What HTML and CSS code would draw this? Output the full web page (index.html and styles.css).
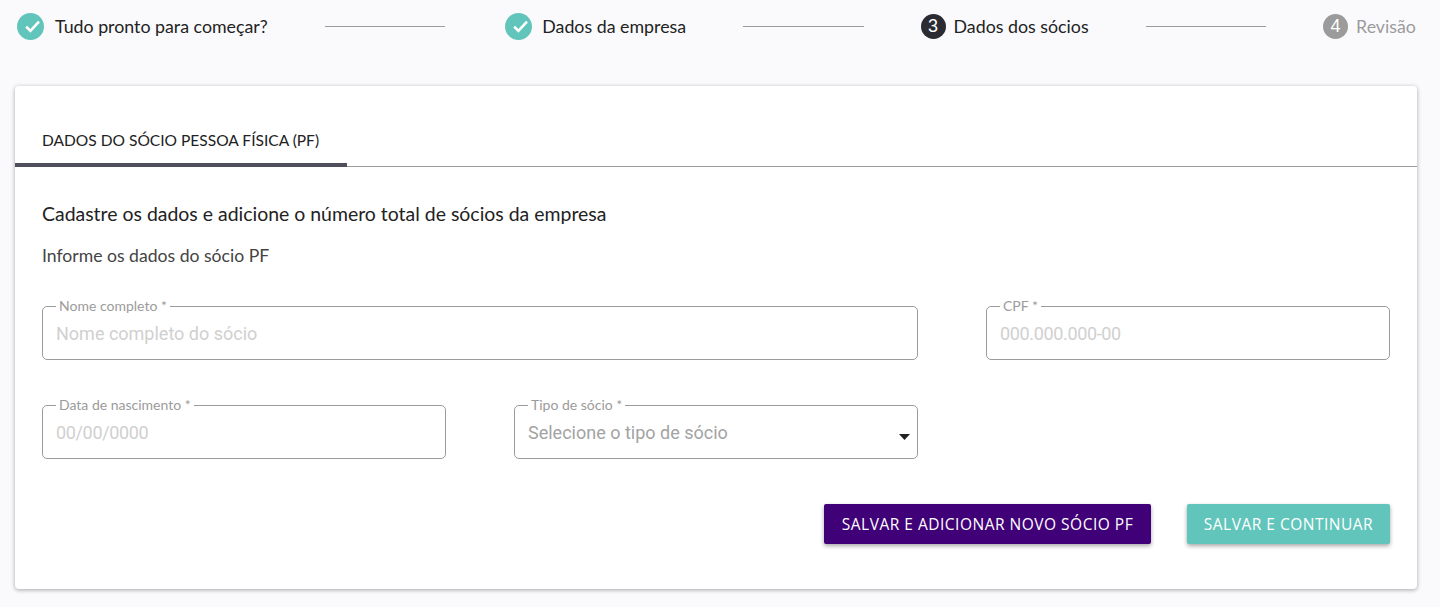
FILE: index.html
```html
<!DOCTYPE html>
<html lang="pt-BR">
<head>
<meta charset="utf-8">
<title>Dados dos sócios</title>
<link rel="stylesheet" href="styles.css">
</head>
<body>
<nav class="stepper">
  <div class="step">
    <svg class="check" viewBox="0 0 27 27"><circle cx="13.5" cy="13.5" r="13.5" fill="#62c5bb"/><path d="M9.2 13.6l4.2 4.2L22 8.6" fill="none" stroke="#fff" stroke-width="2.6"/></svg>
    <span class="step-label">Tudo pronto para começar?</span>
  </div>
  <div class="line"></div>
  <div class="step step-second">
    <svg class="check" viewBox="0 0 27 27"><circle cx="13.5" cy="13.5" r="13.5" fill="#62c5bb"/><path d="M9.2 13.6l4.2 4.2L22 8.6" fill="none" stroke="#fff" stroke-width="2.6"/></svg>
    <span class="step-label">Dados da empresa</span>
  </div>
  <div class="line"></div>
  <div class="step step-near">
    <span class="num num-active">3</span>
    <span class="step-label">Dados dos sócios</span>
  </div>
  <div class="line"></div>
  <div class="step step-near">
    <span class="num num-off">4</span>
    <span class="step-label label-off">Revisão</span>
  </div>
</nav>

<main class="card">
  <div class="tabs">
    <div class="tab">DADOS DO SÓCIO PESSOA FÍSICA (PF)</div>
  </div>
  <div class="content">
    <h2 class="title">Cadastre os dados e adicione o número total de sócios da empresa</h2>
    <p class="subtitle">Informe os dados do sócio PF</p>
    <div class="form-grid">
      <fieldset class="field span-2">
        <legend>Nome completo *</legend>
        <span class="ph">Nome completo do sócio</span>
      </fieldset>
      <fieldset class="field">
        <legend>CPF *</legend>
        <span class="ph ph-num">000.000.000-00</span>
      </fieldset>
      <fieldset class="field">
        <legend>Data de nascimento *</legend>
        <span class="ph ph-num">00/00/0000</span>
      </fieldset>
      <fieldset class="field field-select">
        <legend>Tipo de sócio *</legend>
        <span class="ph ph-select">Selecione o tipo de sócio</span>
        <svg class="caret" viewBox="0 0 11 6"><path d="M0 0h11L5.5 6z" fill="#222"/></svg>
      </fieldset>
    </div>
    <div class="actions">
      <button class="btn btn-purple">SALVAR E ADICIONAR NOVO SÓCIO PF</button>
      <button class="btn btn-teal">SALVAR E CONTINUAR</button>
    </div>
  </div>
</main>
</body>
</html>
```

FILE: styles.css
```css
* { box-sizing: border-box; }
html, body { margin: 0; padding: 0; }
body {
  background: #fafafd;
  font-family: "Lato", sans-serif;
  color: #222;
  height: 607px;
  overflow: hidden;
}
.stepper {
  display: flex;
  align-items: center;
  gap: 57px;
  height: 53px;
  padding: 0 0 0 17px;
}
.step { display: flex; align-items: center; gap: 11px; }
.step-second { gap: 10px; margin-left: 3px; }
.step-near { gap: 8px; }
.check { width: 27px; height: 27px; flex: none; }
.step-label { font-size: 17.8px; color: #222; white-space: nowrap; margin-bottom: 2px; }
.label-off { color: #9b9b9b; }
.num {
  width: 25px; height: 25px; border-radius: 50%;
  display: flex; align-items: center; justify-content: center;
  color: #fff; font-size: 18px; font-family: "Liberation Sans", sans-serif;
}
.num-active { background: #2b2b33; }
.num-off { background: #9b9b9b; }
.line { width: 120.5px; height: 1px; background: #9b9b9b; }

.card {
  margin: 33px 23px 0 15px;
  height: 503px;
  background: #fff;
  border-radius: 4px;
  box-shadow: 0 1px 4px rgba(0,0,0,.35);
  overflow: hidden;
}
.tabs {
  height: 81px;
  border-bottom: 1px solid #9b9b9b;
  display: flex;
  align-items: flex-end;
}
.tab {
  width: 332px;
  height: 50px;
  padding: 0 0 1px 27px;
  display: flex;
  align-items: center;
  font-size: 15.55px;
  color: #222;
  border-bottom: 4px solid #4f4f5b;
  margin-bottom: -1px;
  white-space: nowrap;
}
.content { padding: 0 27px; }
.title {
  margin: 34px 0 0;
  font-size: 19.45px;
  line-height: 26px;
  font-weight: 400;
  color: #222;
}
.subtitle {
  margin: 17px 0 0;
  font-size: 17.6px;
  line-height: 24px;
  color: #444;
}
.form-grid {
  display: grid;
  grid-template-columns: repeat(3, 404px);
  column-gap: 68px;
  row-gap: 38px;
  margin-top: 31px;
}
.span-2 { grid-column: span 2; }
.field {
  margin: 0;
  padding: 0 13px;
  height: 61px;
  border: 1px solid #9b9b9b;
  border-radius: 5px;
  display: flex;
  align-items: center;
  min-width: 0;
  position: relative;
}
.field legend {
  margin-left: 0;
  padding: 0 3px;
  font-size: 14px;
  line-height: 14px;
  color: #9b9b9b;
  white-space: nowrap;
}
.ph {
  font-family: "Roboto", sans-serif;
  font-size: 18px;
  line-height: 24px;
  color: #d0d0d0;
  display: block;
  margin-top: -5px;
}
.ph-num { letter-spacing: -.35px; }
.ph-select { color: #a3a3a3; }
.caret {
  position: absolute;
  right: 7px;
  top: 22px;
  width: 11px;
  height: 6px;
}
.actions {
  display: flex;
  justify-content: flex-end;
  gap: 36px;
  margin-top: 45px;
}
.btn {
  height: 40px;
  border: 0;
  border-radius: 2px;
  color: #fff;
  font-family: "Open Sans", sans-serif;
  font-size: 15.5px;
  letter-spacing: .5px;
  box-shadow: 0 2px 4px rgba(0,0,0,.35);
  padding: 0;
}
.btn-purple { width: 327px; background: #400078; }
.btn-teal { width: 203px; background: #62c5bb; }
```
